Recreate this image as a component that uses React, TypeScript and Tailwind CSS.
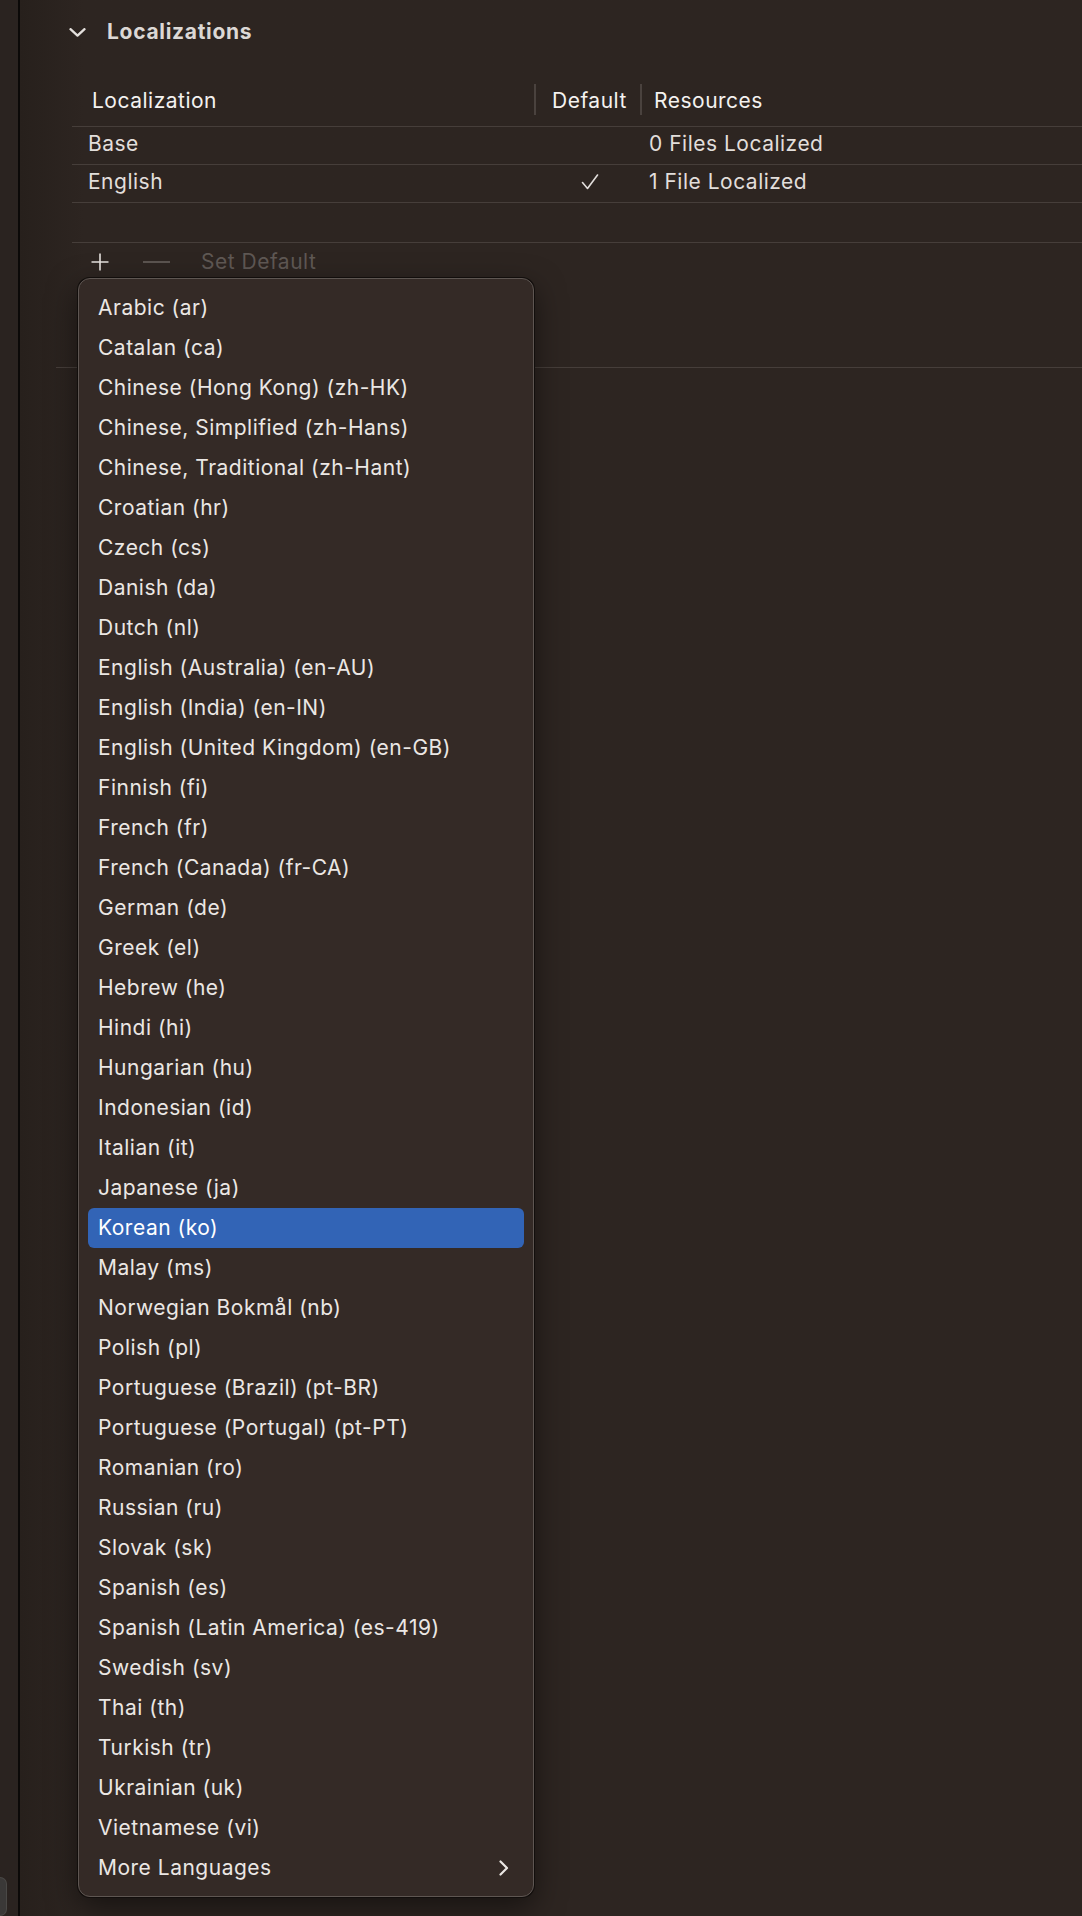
import React from "react";

const languages = [
  "Arabic (ar)",
  "Catalan (ca)",
  "Chinese (Hong Kong) (zh-HK)",
  "Chinese, Simplified (zh-Hans)",
  "Chinese, Traditional (zh-Hant)",
  "Croatian (hr)",
  "Czech (cs)",
  "Danish (da)",
  "Dutch (nl)",
  "English (Australia) (en-AU)",
  "English (India) (en-IN)",
  "English (United Kingdom) (en-GB)",
  "Finnish (fi)",
  "French (fr)",
  "French (Canada) (fr-CA)",
  "German (de)",
  "Greek (el)",
  "Hebrew (he)",
  "Hindi (hi)",
  "Hungarian (hu)",
  "Indonesian (id)",
  "Italian (it)",
  "Japanese (ja)",
  "Korean (ko)",
  "Malay (ms)",
  "Norwegian Bokmål (nb)",
  "Polish (pl)",
  "Portuguese (Brazil) (pt-BR)",
  "Portuguese (Portugal) (pt-PT)",
  "Romanian (ro)",
  "Russian (ru)",
  "Slovak (sk)",
  "Spanish (es)",
  "Spanish (Latin America) (es-419)",
  "Swedish (sv)",
  "Thai (th)",
  "Turkish (tr)",
  "Ukrainian (uk)",
  "Vietnamese (vi)",
];

const font = { fontFamily: "Inter, 'Noto Sans', sans-serif" };

export default function App() {
  return (
    <div
      className="flex w-[1082px] h-[1916px] bg-[#2d2521] overflow-hidden"
      style={font}
    >
      {/* left strip */}
      <div className="w-[18px] h-full bg-[#2a2320] flex flex-col justify-end">
        <div className="w-[7px] h-[39px] rounded-r-[7px] bg-[#3a3837] border border-l-0 border-[#4a4846]" />
      </div>
      <div className="w-[2px] h-full bg-[#0b0908]" />

      {/* main */}
      <div className="relative flex-1 h-full bg-gradient-to-r from-[#27201c] via-[#2d2521] via-[6%] to-[#2d2521]">
        {/* heading */}
        <div className="h-[76px] pt-[20px]">
          <div className="flex items-center h-[24px]">
            <div className="w-[49px]" />
            <svg width="17" height="9" viewBox="0 0 17 9" className="mt-[1px]">
              <path
                d="M1.5 1.2 L8.5 7.6 L15.5 1.2"
                fill="none"
                stroke="#e4e0dd"
                strokeWidth="2.3"
                strokeLinecap="round"
                strokeLinejoin="round"
              />
            </svg>
            <div className="w-[21px]" />
            <span className="text-[21px] leading-[24px] font-bold tracking-[0.7px] text-[#dcd8d5]">
              Localizations
            </span>
          </div>
        </div>

        {/* table */}
        <div className="ml-[52px] text-[21px] leading-[24px] tracking-[0.5px]">
          <div className="flex items-center h-[51px] border-b border-[#463e3a] text-[#f4f2f0]">
            <div className="w-[464px] pl-[20px] relative h-full flex items-center">
              Localization
              <div className="absolute right-0 top-[8px] h-[31px] w-[2px] bg-[#4a423e]" />
            </div>
            <div className="w-[106px] pl-[16px] relative h-full flex items-center">
              Default
              <div className="absolute right-0 top-[8px] h-[31px] w-[2px] bg-[#4a423e]" />
            </div>
            <div className="pl-[12px]">Resources</div>
          </div>

          <div className="flex items-center h-[38px] pb-[4px] border-b border-[#463e3a] text-[#e2dedb]">
            <div className="w-[464px] pl-[16px]">Base</div>
            <div className="w-[106px]" />
            <div className="pl-[7px]">0 Files Localized</div>
          </div>
          <div className="flex items-center h-[38px] pb-[4px] border-b border-[#463e3a] text-[#e2dedb]">
            <div className="w-[464px] pl-[16px]">English</div>
            <div className="w-[106px] flex pl-[45px]">
              <svg width="18" height="16" viewBox="0 0 18 16">
                <path
                  d="M1.5 8.5 L6.5 14.5 L16.5 1"
                  fill="none"
                  stroke="#e2dedb"
                  strokeWidth="1.6"
                  strokeLinecap="round"
                  strokeLinejoin="round"
                />
              </svg>
            </div>
            <div className="pl-[7px]">1 File Localized</div>
          </div>
          <div className="h-[40px] border-b border-[#463e3a]" />

          {/* toolbar */}
          <div className="flex items-center h-[38px]">
            <div className="w-[19px]" />
            <svg width="18" height="18" viewBox="0 0 18 18">
              <path d="M9 0.5 V17.5 M0.5 9 H17.5" stroke="#e6e2df" strokeWidth="1.6" />
            </svg>
            <div className="w-[34px]" />
            <svg width="27" height="4" viewBox="0 0 27 4">
              <path d="M0 2 H27" stroke="#5b5450" strokeWidth="2" />
            </svg>
            <div className="w-[31px]" />
            <span className="text-[#5f5854]">Set Default</span>
          </div>
        </div>

        {/* section separator */}
        <div className="ml-[36px] mt-[86px] border-t border-[#463e3a]" />

        {/* popup menu */}
        <div className="absolute left-[58px] top-[278px] w-[456px] h-[1619px] rounded-[12px] bg-[#342a26] border border-[#5e5652] shadow-[0_0_0_1px_#120e0c,0_10px_30px_rgba(0,0,0,0.5)] px-[9px] pt-[9px] text-[21px] leading-[24px] tracking-[0.5px] text-[#ebe7e4]">
          {languages.map((l) => (
            <div
              key={l}
              className={
                l === "Korean (ko)"
                  ? "h-[40px] flex items-center pl-[10px] rounded-[6px] bg-[#3264b6] text-white"
                  : "h-[40px] flex items-center pl-[10px]"
              }
            >
              {l}
            </div>
          ))}
          <div className="h-[40px] flex items-center justify-between pl-[10px] pr-[15px]">
            <span>More Languages</span>
            <svg width="10" height="16" viewBox="0 0 10 16">
              <path
                d="M1.5 1.5 L8 8 L1.5 14.5"
                fill="none"
                stroke="#ebe7e4"
                strokeWidth="2.2"
                strokeLinecap="round"
                strokeLinejoin="round"
              />
            </svg>
          </div>
        </div>
      </div>
    </div>
  );
}
